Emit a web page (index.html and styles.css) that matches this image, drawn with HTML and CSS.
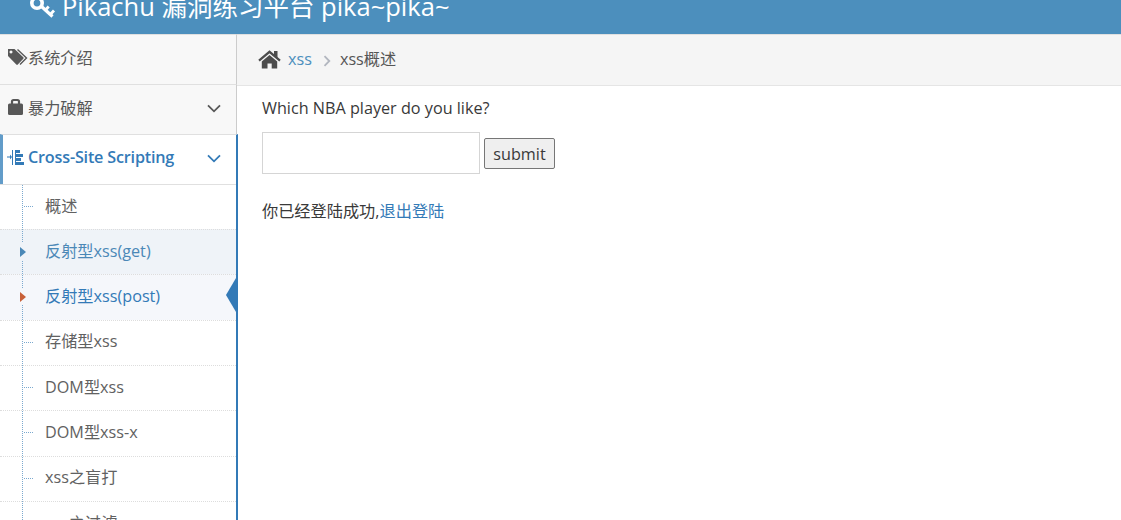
FILE: index.html
```html
<!DOCTYPE html>
<html lang="zh-CN">
<head>
  <meta charset="UTF-8">
  <meta name="viewport" content="width=device-width, initial-scale=1.0">
  <title>Pikachu 漏洞练习平台</title>
  <link rel="stylesheet" href="styles.css">
</head>
<body>
  <header class="navbar">
    <svg class="icon-key" width="27" height="29" viewBox="0 0 27 29">
      <g fill="none" stroke="#fff">
        <circle cx="8" cy="13" r="5.200" stroke-width="3.6"/>
        <path d="M12 16L23.500 26.500" stroke-width="3.2"/>
        <path d="M20.800 25l4.200-4.500M16 20.500l3.700-4" stroke-width="2.8"/>
      </g>
    </svg>
    <span class="brand">Pikachu 漏洞练习平台 pika~pika~</span>
  </header>
  <div class="main">
    <nav class="sidebar">
      <a class="menu-item" href="#">
        <svg class="menu-icon" width="21" height="18" viewBox="0 0 21 18">
          <path fill="#585858" fill-rule="evenodd" d="M1 1h6.5l8.800 8.2c.5.5.5 1 0 1.500l-5.500 5.800c-.5.500-1 .5-1.500 0L1 8zM4 2.500a1.500 1.500 0 1 0 .01 0z"/>
          <path fill="none" stroke="#585858" stroke-width="1.400" d="M10.500 1.400l9 8.500-6.500 6.700"/>
        </svg>
        <span>系统介绍</span>
      </a>
      <a class="menu-item" href="#">
        <svg class="menu-icon" width="21" height="18" viewBox="0 0 21 18">
          <path fill="none" stroke="#585858" stroke-width="2.200" d="M5 7V3.500Q5 2 6.500 2h4Q12 2 12 3.500V7"/>
          <path fill="#585858" d="M2.500 5.500h12q1.500 0 1.500 1.500v8.500q0 1.500-1.500 1.500h-12Q1 17 1 15.500V7q0-1.500 1.500-1.500z"/>
        </svg>
        <span>暴力破解</span>
        <svg class="arrow" width="14" height="9" viewBox="0 0 14 9"><path d="M1 1.300l6 6 6-6"/></svg>
      </a>
      <a class="menu-item open" href="#">
        <svg class="menu-icon" width="21" height="18" viewBox="0 0 21 18">
          <path fill="#337ab7" d="M0 7.500h3V5.500l2 2.500-2 2.500v-2H0zM5 1h1v15H5zM8 1h1v15H8zM8 1h5v3H8zM8 5h8v3H8zM8 9h6v3H8zM8 13h9v3H8z"/>
        </svg>
        <span>Cross-Site Scripting</span>
        <svg class="arrow" width="14" height="9" viewBox="0 0 14 9"><path d="M1 1.300l6 6 6-6"/></svg>
      </a>
      <ul class="submenu">
        <li><a href="#">概述</a></li>
        <li class="hover"><a href="#">反射型xss(get)</a></li>
        <li class="active"><a href="#">反射型xss(post)</a></li>
        <li><a href="#">存储型xss</a></li>
        <li><a href="#">DOM型xss</a></li>
        <li><a href="#">DOM型xss-x</a></li>
        <li><a href="#">xss之盲打</a></li>
        <li><a href="#">xss之过滤</a></li>
      </ul>
    </nav>
    <div class="content">
      <div class="breadcrumb">
        <svg class="icon-home" width="23" height="19" viewBox="0 0 23 19">
          <path fill="none" stroke="#4c4c4c" stroke-width="2.200" d="M1 10.700L11.500 1.800 22 10.700"/>
          <path fill="#4c4c4c" d="M16 1h3.500v7L16 5zM3.800 11.500l7.700-6.500 7.700 6.500V18.500h-5.500v-5H9.500v5H3.800z"/>
        </svg>
        <a href="#">xss</a>
        <svg class="sep" width="8" height="12" viewBox="0 0 8 12"><path d="M1.500 1.200L6.300 6l-4.800 4.800"/></svg>
        <span>xss概述</span>
      </div>
      <div class="page-content">
        <p class="title">Which NBA player do you like?</p>
        <form class="form">
          <input class="text" type="text">
          <input class="submit" type="button" value="submit">
        </form>
        <p class="message">你已经登陆成功,<a href="#">退出登陆</a></p>
      </div>
    </div>
  </div>
</body>
</html>
```
FILE: styles.css
```css
* {
  box-sizing: border-box;
}

body {
  margin: 0;
  height: 520px;
  overflow: hidden;
  font-family: "Open Sans", "Noto Sans CJK SC", sans-serif;
  font-size: 16.2px;
  line-height: 24px;
  color: #393939;
  background-color: #fff;
}

a {
  color: #337ab7;
  text-decoration: none;
}

p {
  margin: 0;
}

.navbar {
  display: flex;
  align-items: flex-end;
  height: 34px;
  padding-left: 29px;
  overflow: hidden;
  color: #fff;
  background-color: #4c8fbd;
}

.icon-key {
  flex: none;
  margin-bottom: 15px;
}

.brand {
  margin-left: 6px;
  padding-bottom: 8px;
  font-size: 25.5px;
  line-height: 40px;
  white-space: nowrap;
}

.main {
  display: flex;
  height: 486px;
}

.sidebar {
  flex: none;
  width: 238px;
  overflow: hidden;
}

.menu-item {
  display: flex;
  align-items: center;
  width: 237px;
  height: 50px;
  padding: 0 15px 3px 7px;
  border-top: 1px solid #e0e0e0;
  border-right: 1px solid #ccc;
  color: #585858;
  background-color: #f8f8f8;
}

.menu-icon {
  flex: none;
  margin-bottom: 2px;
}

.menu-item.open {
  width: 238px;
  padding-bottom: 5px;
  padding-left: 4px;
  border-left: 3px solid #629cc9;
  border-right: 2px solid #337ab7;
  font-weight: 600;
  letter-spacing: -0.2px;
  color: #337ab7;
  background-color: #fff;
}

.menu-item.open .menu-icon {
  margin-bottom: -1px;
}

.arrow {
  margin-left: auto;
  margin-bottom: -1px;
  fill: none;
  stroke: currentColor;
  stroke-width: 1.8;
}

.menu-item.open .arrow {
  margin-bottom: -3px;
}

.submenu {
  position: relative;
  margin: 0;
  padding: 0;
  list-style: none;
  border-right: 2px solid #337ab7;
}

/* dotted tree line */
.submenu::before {
  content: "";
  position: absolute;
  z-index: 1;
  top: 1px;
  left: 22px;
  width: 1px;
  height: 360px;
  background: repeating-linear-gradient(#7ba9cf 0 1px, transparent 1px 2px);
}

.submenu li {
  position: relative;
  height: 45.35px;
  padding: 8.5px 0 0 45px;
  border-top: 1px dotted #ddd;
}

.submenu li:first-child {
  height: 45px;
  border-top: 1px solid #e0e0e0;
}

.submenu li a {
  color: #616161;
}

.submenu li::before {
  content: "";
  position: absolute;
  top: 21px;
  left: 24px;
  width: 9px;
  border-top: 1px dotted #7ba9cf;
}

.submenu li.hover {
  background-color: #eff3f8;
}

.submenu li.active {
  background-color: #f5f7fb;
}

.submenu li.hover a {
  color: #4b88b7;
}

.submenu li.active a {
  color: #337ab7;
}

/* caret covers the tree line */
.submenu li.hover::before,
.submenu li.active::before {
  z-index: 2;
  top: 13px;
  left: 20px;
  width: 5px;
  height: 17px;
  border: 0;
  background-color: inherit;
}

.submenu li.hover::after,
.submenu li.active a::after {
  content: "";
  position: absolute;
  z-index: 3;
  top: 17px;
  left: 20px;
  border: solid transparent;
  border-width: 5px 0 5px 6px;
  border-left-color: #4b88b7;
}

.submenu li.active a::after {
  border-left-color: #c86139;
}

.submenu li.active::after {
  content: "";
  position: absolute;
  top: 3px;
  right: 0;
  border: solid transparent;
  border-width: 17px 10px 17px 0;
  border-right-color: #337ab7;
}

.content {
  flex: 1;
  margin-left: -1px;
}

.breadcrumb {
  display: flex;
  align-items: center;
  height: 52px;
  padding: 0 0 2px 21px;
  border-top: 1px solid #e0e0e0;
  border-bottom: 1px solid #e5e5e5;
  background-color: #f5f5f5;
}

.breadcrumb a {
  margin-left: 7px;
  color: #4c8fbd;
}

.breadcrumb span {
  color: #555;
}

.sep {
  margin: 3px 9px 0 11px;
  fill: none;
  stroke: #b2b6bf;
  stroke-width: 1.8;
}

.page-content {
  padding: 10px 25px;
}

.form {
  display: flex;
  align-items: center;
  gap: 4px;
  margin-top: 12px;
}

.text {
  width: 218px;
  height: 42px;
  border: 1px solid #d5d5d5;
  border-radius: 0;
}

.submit {
  width: 71px;
  height: 31px;
  padding: 1px 0 0;
  font: inherit;
  color: #393939;
  background-color: #efefef;
  border: 1px solid #767676;
  border-radius: 2px;
}

.message {
  margin-top: 25px;
}
```
